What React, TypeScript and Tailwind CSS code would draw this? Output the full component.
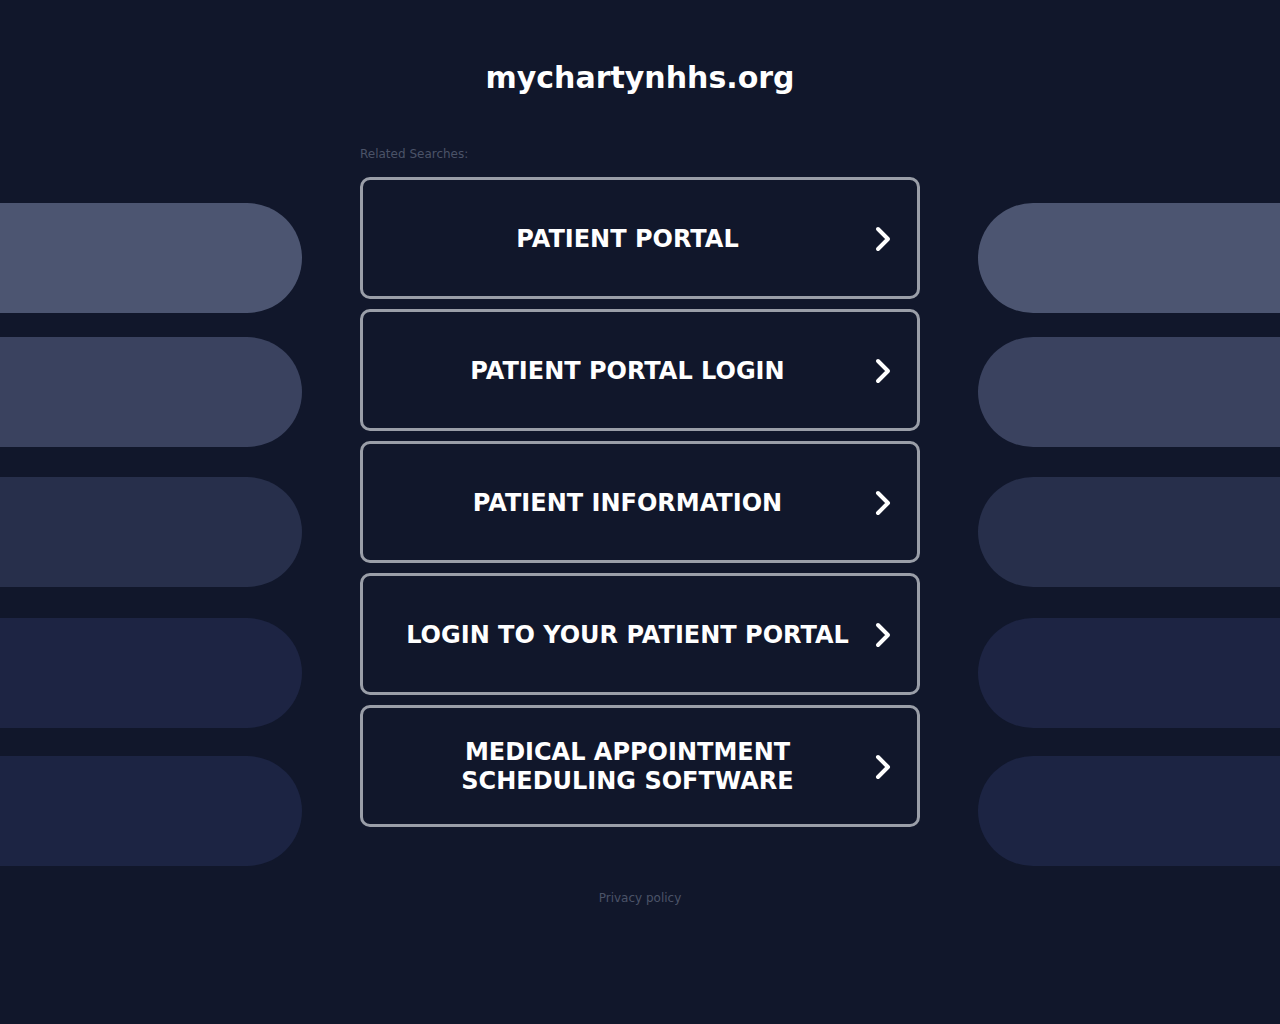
import React from "react";

const links = [
    "PATIENT PORTAL",
    "PATIENT PORTAL LOGIN",
    "PATIENT INFORMATION",
    "LOGIN TO YOUR PATIENT PORTAL",
    "MEDICAL APPOINTMENT SCHEDULING SOFTWARE",
];

const Chevron = () => (
    <svg width="18" height="28" viewBox="0 0 18 28" fill="none" className="shrink-0">
        <path d="M4 4l10 10-10 10" stroke="#ffffff" strokeWidth={4} strokeLinecap="round" strokeLinejoin="round" />
    </svg>
);

const Pills = ({ side }: { side: "left" | "right" }) => {
    const round = side === "left" ? "rounded-r-full" : "rounded-l-full";
    return (
        <div className="w-[302px] flex flex-col pt-[57px]">
            <div className={`h-[110px] bg-[#4c5571] ${round}`} />
            <div className={`h-[110px] mt-[24px] bg-[#3a425f] ${round}`} />
            <div className={`h-[110px] mt-[30px] bg-[#272f4b] ${round}`} />
            <div className={`h-[110px] mt-[31px] bg-[#1d2443] ${round}`} />
            <div className={`h-[110px] mt-[28px] bg-[#1c2443] ${round}`} />
        </div>
    );
};

const App = () => {
    return (
        <div className="min-h-screen w-full bg-[#11172b] text-white font-['DejaVu_Sans',sans-serif] overflow-hidden">
            <h1 className="pt-[59px] text-center text-[30px] leading-[38px] font-bold">mychartynhhs.org</h1>
            <div className="mt-[49px] flex justify-between items-start">
                <Pills side="left" />
                <div className="w-[560px] flex flex-col">
                    <div className="text-[12px] leading-[16px] text-[#4b5368] h-[31px]">Related Searches:</div>
                    <div className="flex flex-col gap-[10px]">
                        {links.map((l) => (
                            <a
                                key={l}
                                href="#"
                                className="h-[122px] border-[3px] border-[#9a9ea8] rounded-[10px] flex items-center pl-[40px] pr-[25px] pt-[2px]"
                            >
                                <span className="flex-1 text-center text-[24px] leading-[29px] font-bold mr-[22px]">
                                    {l}
                                </span>
                                <Chevron />
                            </a>
                        ))}
                    </div>
                    <div className="mt-[63px] text-center text-[12px] leading-[16px] text-[#4b5368]">Privacy policy</div>
                </div>
                <Pills side="right" />
            </div>
        </div>
    );
};

export default App;
